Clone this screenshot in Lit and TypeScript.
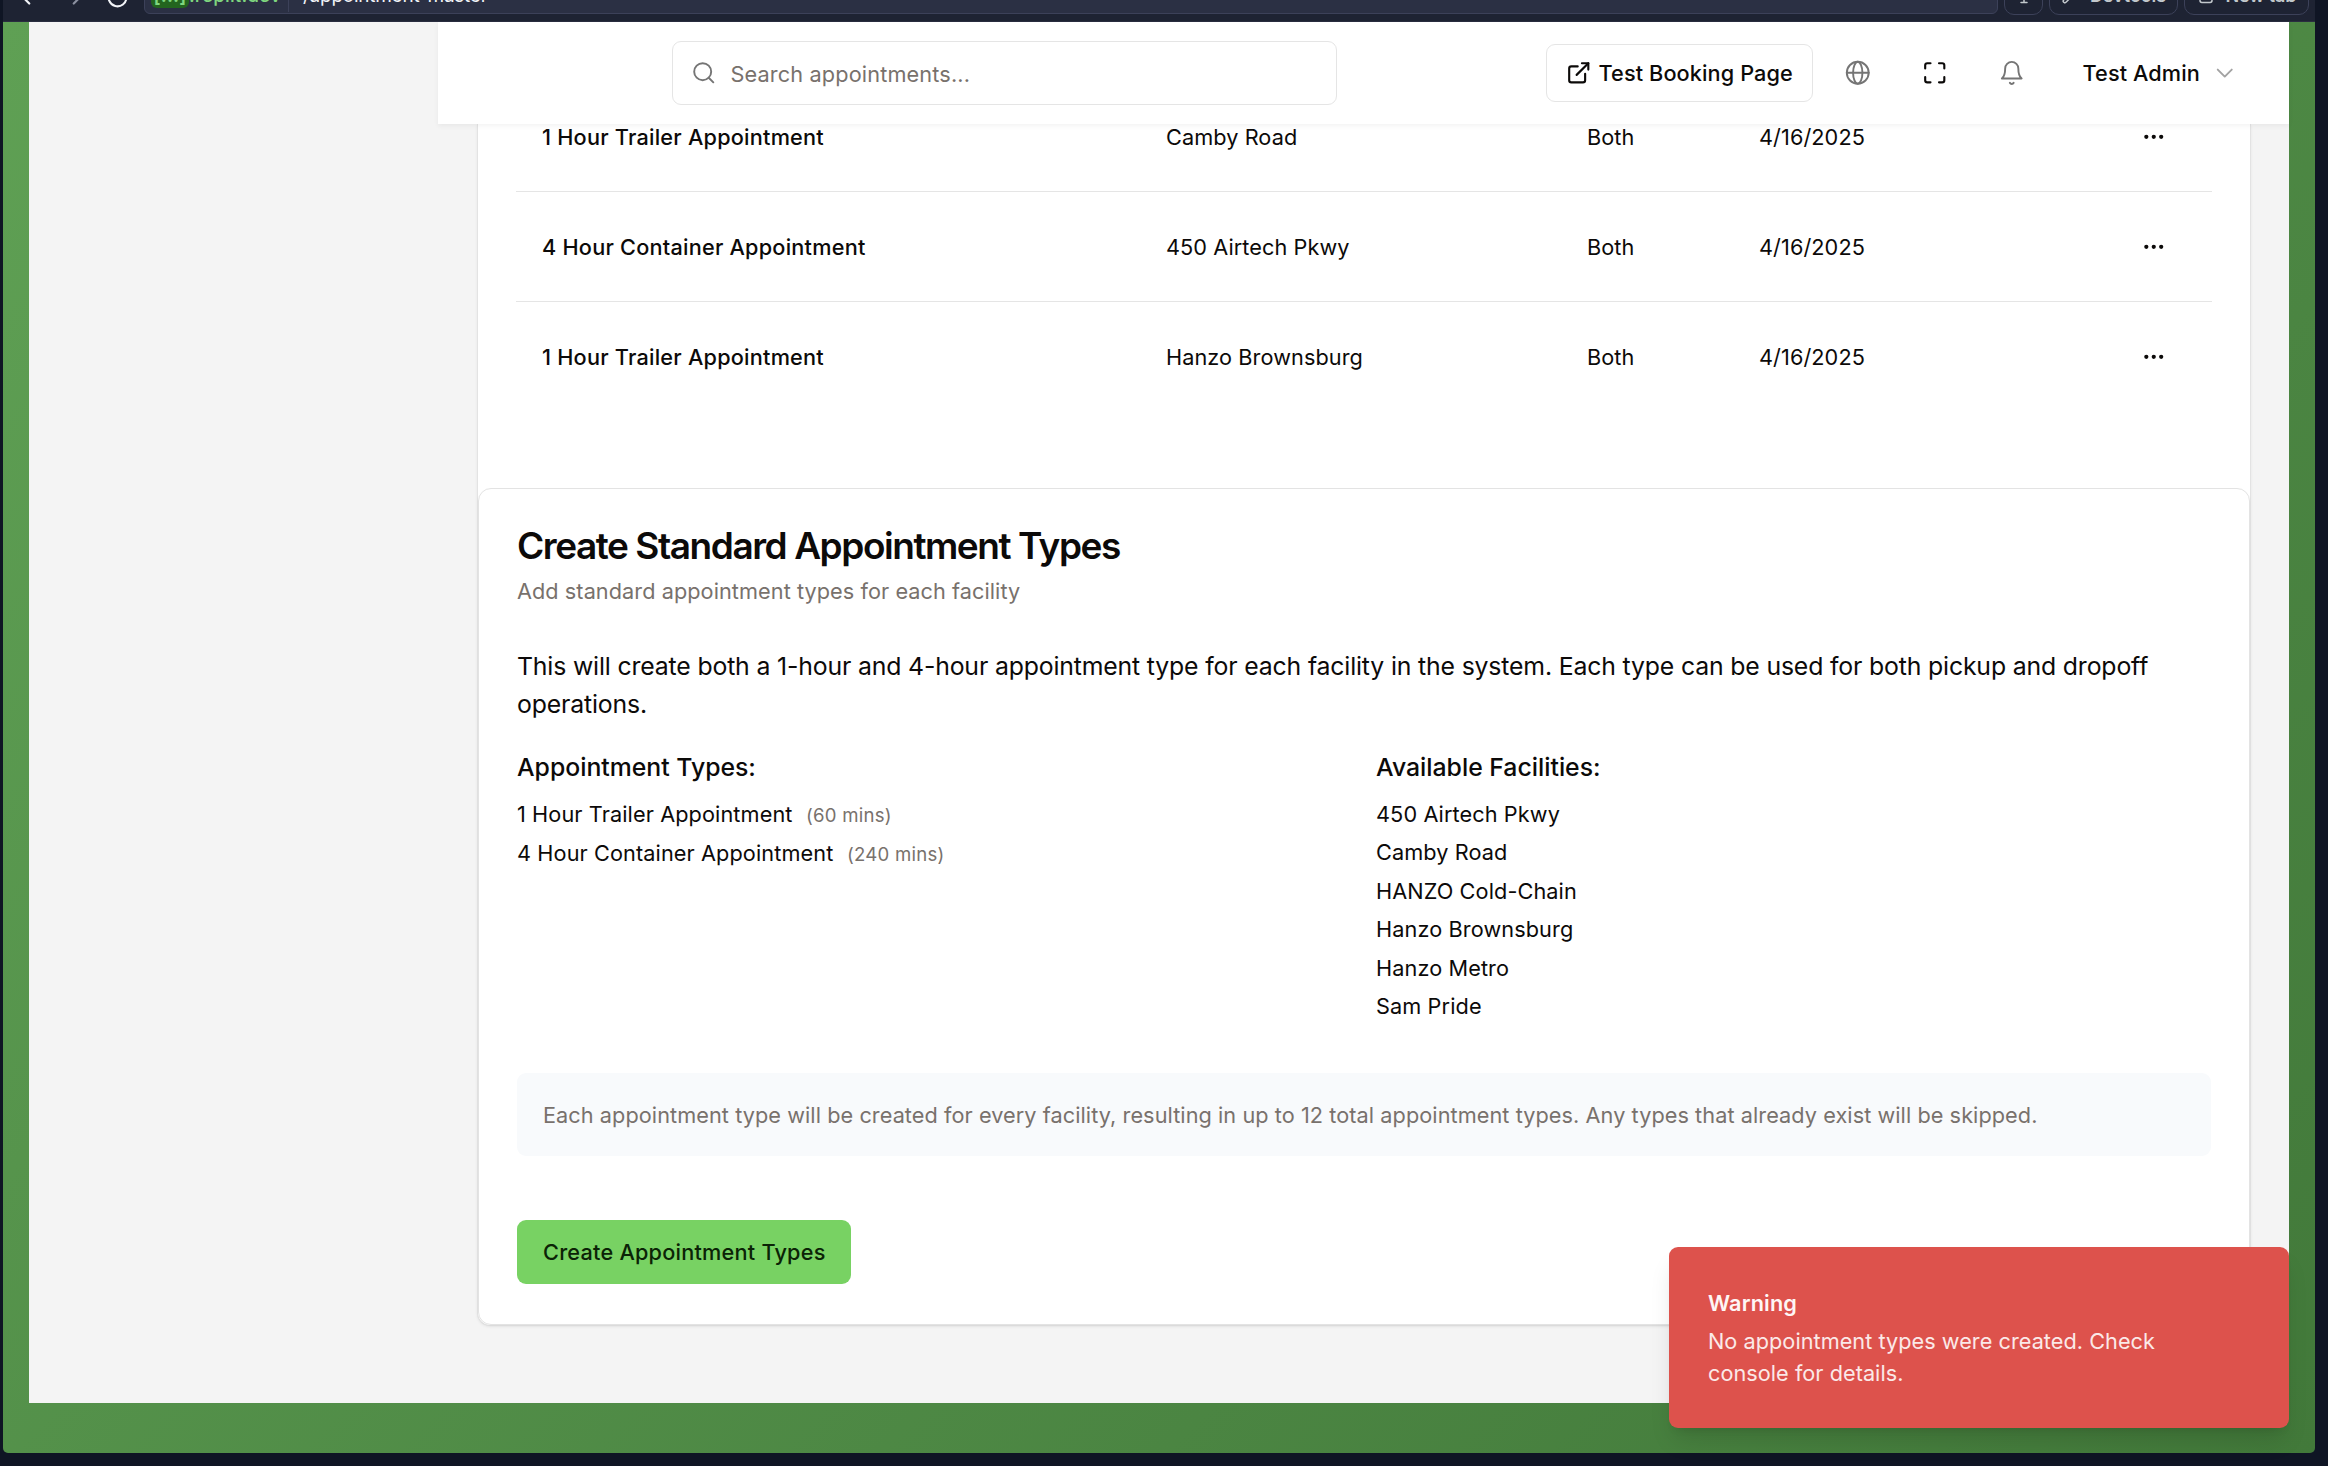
import { LitElement, html, css, svg, TemplateResult } from "lit";
import { customElement, property } from "lit/decorators.js";

interface AppointmentRow {
  name: string;
  facility: string;
  direction: string;
  created: string;
}

const rows: AppointmentRow[] = [
  { name: "1 Hour Trailer Appointment", facility: "Camby Road", direction: "Both", created: "4/16/2025" },
  { name: "4 Hour Container Appointment", facility: "450 Airtech Pkwy", direction: "Both", created: "4/16/2025" },
  { name: "1 Hour Trailer Appointment", facility: "Hanzo Brownsburg", direction: "Both", created: "4/16/2025" },
];

const facilities = [
  "450 Airtech Pkwy",
  "Camby Road",
  "HANZO Cold-Chain",
  "Hanzo Brownsburg",
  "Hanzo Metro",
  "Sam Pride",
];

const types = [
  { name: "1 Hour Trailer Appointment", length: "(60 mins)" },
  { name: "4 Hour Container Appointment", length: "(240 mins)" },
];

const glyphs: Record<string, TemplateResult> = {
  search: svg`<circle cx="11" cy="11" r="8"/><path d="m21 21-4.3-4.3"/>` as TemplateResult,
  external: svg`<path d="M15 3h6v6"/><path d="M10 14 21 3"/><path d="M18 13v6a2 2 0 0 1-2 2H5a2 2 0 0 1-2-2V8a2 2 0 0 1 2-2h6"/>` as TemplateResult,
  globe: svg`<circle cx="12" cy="12" r="10.3"/><ellipse cx="12" cy="12" rx="4.4" ry="10.3"/><path d="M1.7 12h20.6"/>` as TemplateResult,
  maximize: svg`<path d="M8 3H5a2 2 0 0 0-2 2v3"/><path d="M21 8V5a2 2 0 0 0-2-2h-3"/><path d="M3 16v3a2 2 0 0 0 2 2h3"/><path d="M16 21h3a2 2 0 0 0 2-2v-3"/>` as TemplateResult,
  bell: svg`<path d="M5.8 8a6.2 6.2 0 0 1 12.4 0c0 7 3.1 9.4 3.1 9.4H2.7S5.8 15 5.8 8"/><path d="M10.2 21.4a2 2 0 0 0 3.6 0"/>` as TemplateResult,
  down: svg`<path d="m5.4 9 6.6 6.6L18.600 9"/>` as TemplateResult,
  dots: svg`<circle cx="12" cy="12" r="1"/><circle cx="19" cy="12" r="1"/><circle cx="5" cy="12" r="1"/>` as TemplateResult,
  back: svg`<path d="m15 18-6-6 6-6"/>` as TemplateResult,
  forward: svg`<path d="m9 18 6-6-6-6"/>` as TemplateResult,
  reload: svg`<path d="M20.500 12a8.500 8.500 0 1 1-2.500-6l2.500 2.500"/><path d="M20.500 4v4.500H16"/>` as TemplateResult,
  monitor: svg`<rect x="3" y="3" width="18" height="13" rx="2"/><path d="M8 20.500h8M12 16v4.500"/>` as TemplateResult,
  wrench: svg`<path d="M14.700 6.300a1 1 0 0 0 0 1.400l1.600 1.600a1 1 0 0 0 1.400 0l3.770-3.770a6 6 0 0 1-7.940 7.940l-6.910 6.910a2.120 2.120 0 0 1-3-3l6.910-6.910a6 6 0 0 1 7.940-7.940z"/>` as TemplateResult,
  tab: svg`<rect x="4" y="4" width="16" height="16.500" rx="2.500"/>` as TemplateResult,
};

@customElement("ui-icon")
export class UiIcon extends LitElement {
  @property() name = "";

  static styles = css`
    :host {
      display: block;
      flex: none;
      width: 25.5px;
      height: 25.5px;
      stroke-width: 2;
    }
    .glyph {
      display: block;
      width: 100%;
      height: 100%;
      overflow: visible;
      fill: none;
      stroke: currentColor;
      stroke-linecap: round;
      stroke-linejoin: round;
    }
  `;

  render() {
    return html`<svg class="glyph" viewBox="0 0 24 24">${glyphs[this.name]}</svg>`;
  }
}

@customElement("app-root")
export class AppRoot extends LitElement {
  static styles = css`
    :host {
      display: block;
      width: 2328px;
      height: 1466px;
      overflow: hidden;
      background: #0f1524;
      font-family: Inter, "Liberation Sans", sans-serif;
      color: #0c0a09;
      font-size: 21.7px;
      line-height: 32px;
      letter-spacing: 0.08px;
    }
    * {
      box-sizing: border-box;
    }
    .nowrap {
      white-space: nowrap;
    }
    .med {
      font-weight: 500;
      letter-spacing: 0.22px;
    }
    .muted {
      color: #78716c;
    }
    .shell {
      width: 2312px;
      margin-left: 3px;
    }

    /* browser toolbar, scrolled partly out of view */
    .browser {
      height: 22px;
      background: #1e2333;
      border-bottom: 1px solid #2a2d40;
      overflow: hidden;
    }
    .tools {
      height: 36px;
      margin-top: -21px;
      display: flex;
      align-items: center;
      color: #f2f4f8;
      font-size: 19px;
      white-space: nowrap;
    }
    .tools ui-icon {
      width: 26px;
      height: 26px;
    }
    .back {
      margin-left: 10px;
    }
    .forward {
      margin-left: 25px;
      color: #8b90a0;
    }
    .reload {
      margin-left: 15px;
    }
    .tools .reload {
      width: 25px;
      height: 25px;
    }
    .url {
      margin-left: 14px;
      width: 1854px;
      height: 34px;
      border: 1px solid #3c4159;
      border-radius: 6px;
      background: #2b3044;
      display: flex;
      align-items: center;
      padding-bottom: 2px;
    }
    .pill {
      width: 38px;
      height: 24px;
      margin-left: 6px;
      border-radius: 6px;
      background: #23651f;
      color: #7fd67f;
      font-weight: 600;
      display: flex;
      align-items: center;
      justify-content: center;
    }
    .domain {
      width: 100px;
      height: 32px;
      line-height: 32px;
      border-right: 1px solid #3c4159;
      color: #7fd67f;
      font-weight: 500;
      letter-spacing: 0.1px;
    }
    .path {
      margin-left: 14px;
      flex: 1;
      letter-spacing: -0.25px;
    }
    .tools .more {
      width: 18px;
      height: 18px;
      margin-right: 11px;
      color: #a4a9b8;
    }
    .tool {
      height: 36px;
      margin-left: 6px;
      border: 1px solid #3c4159;
      border-radius: 10px;
      display: flex;
      align-items: center;
      justify-content: center;
      gap: 11px;
      color: #c2c8cc;
      font-size: 18px;
      font-weight: 600;
      letter-spacing: -0.1px;
      padding-bottom: 2px;
    }
    .tools .tool ui-icon {
      width: 18px;
      height: 18px;
    }
    .square {
      width: 39px;
    }
    .devtools {
      width: 129px;
    }
    .newtab {
      width: 125px;
    }

    .frame {
      height: 1431px;
      background: linear-gradient(135deg, #5fa054, #42793a);
      padding: 0 26px 50px;
      border-radius: 0 0 5px 5px;
      position: relative;
    }
    .page {
      height: 1381px;
      background: #f4f4f4;
      display: flex;
    }
    .side {
      width: 409px;
      flex: none;
    }
    .main {
      flex: 1;
    }

    .header {
      height: 102px;
      background: #fff;
      box-shadow: 0 2px 5px rgba(0, 0, 0, 0.05);
      position: relative;
      display: flex;
      align-items: center;
      padding-left: 234px;
    }
    .search {
      width: 665px;
      height: 64px;
      border: 1px solid #e5e5e5;
      border-radius: 9px;
      display: flex;
      align-items: center;
      padding-left: 18px;
      gap: 14px;
      color: #78716c;
      letter-spacing: 0.14px;
    }
    .search span {
      padding-top: 2px;
    }
    .booking {
      margin-left: 209px;
      width: 267px;
      height: 58px;
      border: 1px solid #e5e5e5;
      border-radius: 9px;
      display: flex;
      align-items: center;
      padding-left: 19px;
      gap: 7px;
      font-weight: 500;
      letter-spacing: 0.1px;
    }
    .thin {
      stroke-width: 1.8;
      color: #757575;
    }
    .globe {
      margin-left: 32px;
    }
    .spaced {
      margin-left: 51.5px;
    }
    .user {
      margin-left: 58px;
      font-weight: 500;
      letter-spacing: 0.1px;
    }
    .caret {
      margin-left: 12px;
      stroke-width: 1.8;
      color: #a3a3a3;
    }

    .outer {
      margin: 0 38px 0 39px;
      height: 1202px;
      border: 1px solid #e3e3e3;
      border-top: 0;
      border-radius: 0 0 13px 13px;
      background: #fff;
      box-shadow: 0 1px 3px rgba(0, 0, 0, 0.06);
    }
    .table {
      height: 364px;
      overflow: hidden;
      padding: 0 38px;
    }
    .rows {
      margin-top: -42px;
    }
    .row {
      height: 110px;
      border-bottom: 1px solid #e5e5e5;
      display: grid;
      grid-template-columns: 624px 421px 172px 1fr;
      align-items: center;
      padding-left: 26px;
    }
    .row:last-child {
      border-bottom-color: transparent;
    }
    .end {
      display: flex;
      justify-content: space-between;
      align-items: center;
      padding-right: 46px;
    }

    .inner {
      border: 1px solid #e3e3e3;
      border-radius: 13px;
      height: 837px;
      padding: 38px;
      box-shadow: 0 1px 2px rgba(0, 0, 0, 0.05);
    }
    .title {
      font-size: 37px;
      font-weight: 600;
      line-height: 38px;
      letter-spacing: -1.45px;
    }
    .sub {
      margin-top: 10px;
      letter-spacing: 0.06px;
    }
    .para {
      margin-top: 39.5px;
      font-size: 24.8px;
      line-height: 38px;
      letter-spacing: -0.155px;
    }
    .cols {
      margin-top: 25.5px;
      display: grid;
      grid-template-columns: 1fr 1fr;
      gap: 24px;
    }
    .heading {
      font-size: 24.8px;
      line-height: 38px;
      font-weight: 500;
      letter-spacing: -0.01px;
      margin-bottom: 12px;
    }
    .list {
      display: flex;
      flex-direction: column;
      gap: 6.4px;
      letter-spacing: 0.1px;
    }
    .small {
      font-size: 18.6px;
      letter-spacing: 0.25px;
      margin-left: 13.5px;
    }
    .notice {
      margin-top: 51.5px;
      height: 83px;
      border-radius: 9px;
      background: #f8fafc;
      display: flex;
      align-items: center;
      padding-left: 26px;
      letter-spacing: 0.065px;
    }
    .button {
      margin-top: 64px;
      width: 334px;
      height: 64px;
      border-radius: 9px;
      background: #78d263;
      display: flex;
      align-items: center;
      padding-left: 26px;
      color: #0b2306;
    }

    .toast {
      position: absolute;
      left: 1666px;
      top: 1225px;
      width: 620px;
      height: 181px;
      background: #dd524c;
      border-radius: 9px;
      padding: 40px 39px;
      color: #fbe9e8;
      letter-spacing: 0.03px;
      box-shadow: 0 16px 24px -5px rgba(0, 0, 0, 0.12), 0 6px 10px -6px rgba(0, 0, 0, 0.12);
    }
    .toast-title {
      font-weight: 600;
      color: #fef6f5;
      letter-spacing: 0.15px;
      margin-bottom: 6px;
    }
  `;

  render() {
    return html`
      <div class="shell">
        <div class="browser">
          <div class="tools">
            <ui-icon class="back" name="back"></ui-icon>
            <ui-icon class="forward" name="forward"></ui-icon>
            <ui-icon class="reload" name="reload"></ui-icon>
            <div class="url">
              <span class="pill">[...]</span>
              <span class="domain">.replit.dev</span>
              <span class="path">/appointment-master</span>
              <ui-icon class="more" name="down"></ui-icon>
            </div>
            <div class="tool square"><ui-icon name="monitor"></ui-icon></div>
            <div class="tool devtools"><ui-icon name="wrench"></ui-icon><span>Devtools</span></div>
            <div class="tool newtab"><ui-icon name="tab"></ui-icon><span>New tab</span></div>
          </div>
        </div>
        <div class="frame">
          <div class="page">
            <div class="side"></div>
            <div class="main">
              <div class="header">
                <div class="search"><ui-icon class="thin" name="search"></ui-icon><span>Search appointments...</span></div>
                <div class="booking"><ui-icon name="external"></ui-icon><span>Test Booking Page</span></div>
                <ui-icon class="thin globe" name="globe"></ui-icon>
                <ui-icon class="spaced" name="maximize"></ui-icon>
                <ui-icon class="thin spaced" name="bell"></ui-icon>
                <span class="user">Test Admin</span>
                <ui-icon class="caret" name="down"></ui-icon>
              </div>
              <div class="outer">
                <div class="table">
                  <div class="rows">
                    ${rows.map(
                      (r) => html`<div class="row">
                        <div class="med">${r.name}</div>
                        <div>${r.facility}</div>
                        <div>${r.direction}</div>
                        <div class="end"><span>${r.created}</span><ui-icon name="dots"></ui-icon></div>
                      </div>`
                    )}
                  </div>
                </div>
                <div class="inner">
                  <div class="title">Create Standard Appointment Types</div>
                  <div class="sub muted">Add standard appointment types for each facility</div>
                  <div class="para">
                    This will create both a 1-hour and 4-hour appointment type for each facility in the system. Each type
                    can be used for both pickup and dropoff operations.
                  </div>
                  <div class="cols">
                    <div>
                      <div class="heading">Appointment Types:</div>
                      <div class="list">
                        ${types.map((t) => html`<div>${t.name}<span class="small muted">${t.length}</span></div>`)}
                      </div>
                    </div>
                    <div>
                      <div class="heading">Available Facilities:</div>
                      <div class="list">${facilities.map((f) => html`<div>${f}</div>`)}</div>
                    </div>
                  </div>
                  <div class="notice muted">
                    Each appointment type will be created for every facility, resulting in up to 12 total appointment
                    types. Any types that already exist will be skipped.
                  </div>
                  <div class="button med">Create Appointment Types</div>
                </div>
              </div>
            </div>
          </div>
          <div class="toast">
            <div class="toast-title">Warning</div>
            <div class="nowrap">No appointment types were created. Check<br />console for details.</div>
          </div>
        </div>
      </div>
    `;
  }
}
